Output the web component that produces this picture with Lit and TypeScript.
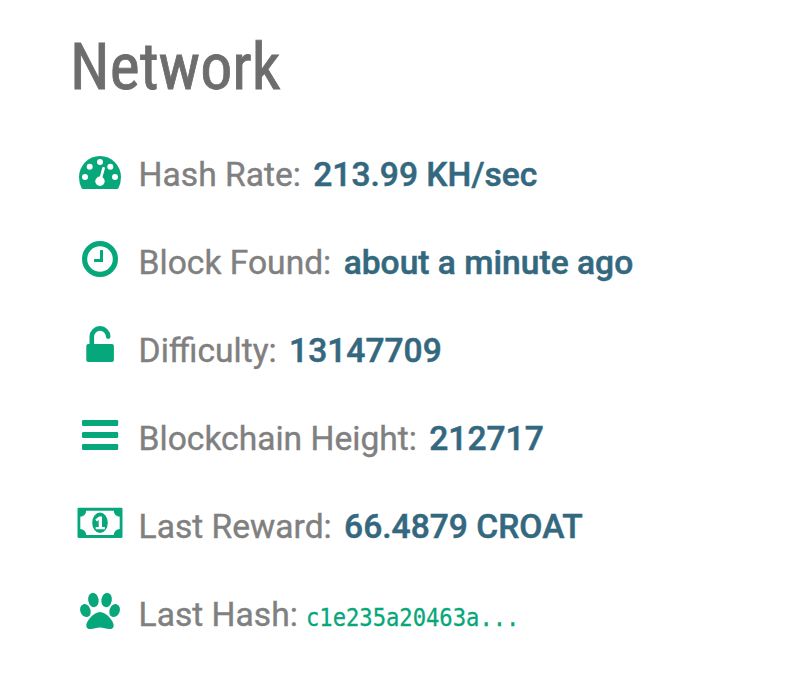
import { LitElement, html, svg, css } from "lit";
import { customElement } from "lit/decorators.js";

const gauge = svg`
  <path d="M4.6 38.3 Q2 33.2 2 27 A21 21 0 0 1 44 27 Q44 33.2 41.4 38.3 Q41 39 40.2 39 H5.8 Q5 39 4.6 38.3Z"/>
  <g class="cut"><circle cx="8" cy="27" r="3"/><circle cx="12.7" cy="16.7" r="3"/><circle cx="23" cy="12" r="3"/>
  <circle cx="33.3" cy="16.7" r="3"/><circle cx="38" cy="27" r="3"/><circle cx="23" cy="31.3" r="4.7"/></g>
  <path class="needle" d="M23.6 29 L26.5 18.4"/>`;
const clock = svg`
  <circle class="line" cx="23" cy="21" r="15.4" stroke-width="5.2"/>
  <rect x="23" y="12" width="3" height="12" rx=".5"/><rect x="17" y="21" width="9" height="3" rx=".5"/>`;
const unlock = svg`
  <rect x="9.3" y="18" width="27.6" height="18" rx="2"/>
  <path class="line" d="M14.8 19 V10.6 a8.2 8.2 0 0 1 16.4 0" stroke-width="4.6" stroke-linecap="round"/>`;
const bars = svg`
  <rect x="5" y="6" width="36.2" height="6" rx="1.2"/><rect x="5" y="18" width="36.2" height="6" rx="1.2"/>
  <rect x="5" y="30" width="36.2" height="6" rx="1.2"/>`;
const money = svg`
  <rect x=".5" y="5.7" width="45" height="30.2" rx="1.3"/>
  <path class="cut" d="M9.2 8.7 H36.8 A6 6 0 0 0 42.7 14.7 V27 A6 6 0 0 0 36.8 33 H9.2 A6 6 0 0 0 3.3 27 V14.7 A6 6 0 0 0 9.2 8.7Z"/>
  <ellipse cx="23" cy="20.8" rx="7.8" ry="10.3"/>
  <path class="cut" d="M22 14.4 H25 V24.9 H27.8 V27.2 H18.7 V24.9 H21.7 V18 L19.8 19.4 L18.3 17.6Z"/>`;
const paw = svg`
  <ellipse cx="16.4" cy="10" rx="5.2" ry="7.2" transform="rotate(-10 16.4 10)"/><ellipse cx="29.6" cy="10" rx="5.2" ry="7.2" transform="rotate(10 29.6 10)"/>
  <ellipse cx="8.4" cy="20.6" rx="5.1" ry="6.7" transform="rotate(-22 8.4 20.6)"/><ellipse cx="37.6" cy="20.6" rx="5.1" ry="6.7" transform="rotate(22 37.6 20.6)"/>
  <path d="M23 22 C29 22 36.7 31 36.7 35.4 C36.7 38 35 39 32.4 39 C29 39 26.4 37.4 23 37.4 C19.5 37.4 17 39 13.6 39 C11 39 9.3 38 9.3 35.4 C9.3 31 17 22 23 22Z"/>`;

const rows = [
  { icon: gauge, label: "Hash Rate:", value: "213.99 KH/sec" },
  { icon: clock, label: "Block Found:", value: "about a minute ago" },
  { icon: unlock, label: "Difficulty:", value: "13147709" },
  { icon: bars, label: "Blockchain Height:", value: "212717" },
  { icon: money, label: "Last Reward:", value: "66.4879 CROAT" },
  { icon: paw, label: "Last Hash:", value: "c1e235a20463a...", hash: true },
];

@customElement("app-root")
export class AppRoot extends LitElement {
  static styles = css`
    :host { display: block; box-sizing: border-box; height: 686px; background: #fff; overflow: hidden;
      font-family: Roboto, "Liberation Sans", sans-serif; }
    h3 { box-sizing: border-box; margin: 0; padding: 30px 0 0 70px; height: 129px; line-height: 75px; font-size: 64px;
      font-family: "Roboto Condensed", Roboto, sans-serif; font-stretch: 75%; font-weight: 400; color: #6d6d6d;
      -webkit-text-stroke: .8px #6d6d6d; }
    .list { display: flex; flex-direction: column; }
    .row { display: flex; align-items: center; height: 88px; padding-left: 77px; font-size: 33.6px; line-height: 40px; white-space: pre; }
    svg { width: 46px; height: 46px; flex: none; overflow: visible; fill: #06a77a; }
    .cut { fill: #fff; }
    .needle { fill: none; stroke: #fff; stroke-width: 2.8; stroke-linecap: round; }
    .line { fill: none; stroke: #06a77a; }
    .label { margin-left: 15.6px; padding-top: 4px; color: #808080; -webkit-text-stroke: .4px #808080; }
    .value { margin-left: 12.4px; padding-top: 4px; color: #34687f; font-weight: 500; -webkit-text-stroke: .5px #34687f; }
    .hash { margin-left: 8px; color: #06a77a; font: 24px/40px "DejaVu Sans Mono", monospace;
      transform: scaleX(.923); transform-origin: left; padding-top: 9px; -webkit-text-stroke: .3px #06a77a; }
  `;

  render() {
    return html`
      <h3>Network</h3>
      <div class="list">
        ${rows.map((r) => html`<div class="row">
          <svg viewBox="0 0 46 46" aria-hidden="true">${r.icon}</svg><span class="label">${r.label}</span><span class=${r.hash ? "hash" : "value"}>${r.value}</span>
        </div>`)}
      </div>`;
  }
}
